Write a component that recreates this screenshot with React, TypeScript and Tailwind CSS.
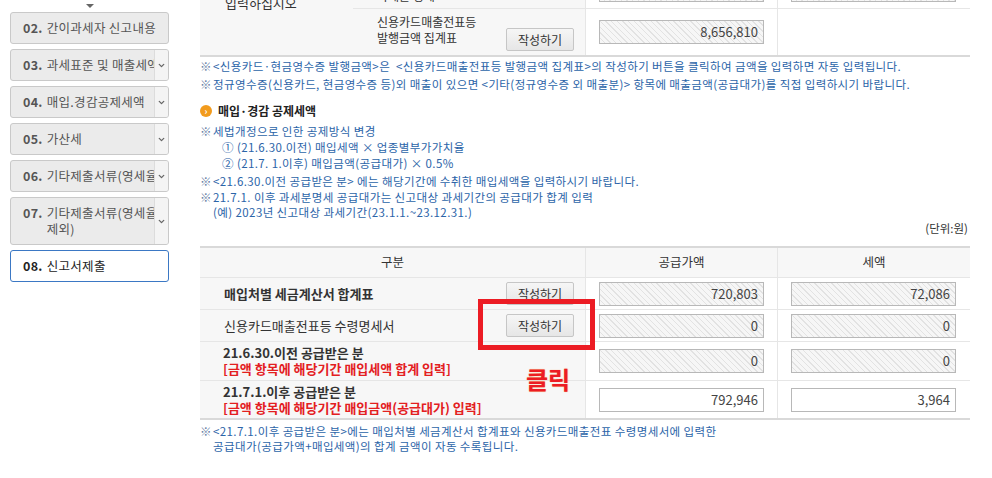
import React from 'react';
import { ChevronDown } from 'lucide-react';

const hatch =
    'bg-[repeating-linear-gradient(45deg,#f6f6f6_0px,#f6f6f6_3px,#e2e2e2_3px,#e2e2e2_4px)]';

function SideItem({
    num,
    label,
    dropdown = true,
    active = false,
    wrap = false,
}: {
    num: string;
    label: string;
    dropdown?: boolean;
    active?: boolean;
    wrap?: boolean;
}) {
    return (
        <div
            className={`flex w-[159px] rounded-[3px] border overflow-hidden ${
                active ? 'bg-white border-[#3b78c4]' : 'bg-[#ebebeb] border-[#c9c9c9]'
            } ${wrap ? 'h-[48px]' : 'h-[32px]'}`}
        >
            <div
                className={`flex-1 min-w-0 flex pl-[12px] text-[12.5px] tracking-[0.3px] leading-[16px] ${
                    wrap ? 'pt-[7px] whitespace-pre' : 'items-center whitespace-nowrap'
                } ${active ? 'text-[#222]' : 'text-[#555]'}`}
            >
                <span className="font-bold shrink-0 mr-[4px]">{num}</span>
                <span className="overflow-hidden">{label}</span>
            </div>
            {dropdown && (
                <div className="w-[14px] shrink-0 flex items-center justify-center border-l border-[#dcdcdc] bg-[#f4f4f4] text-[#666]">
                    <ChevronDown size={9} strokeWidth={3.5} />
                </div>
            )}
        </div>
    );
}

function Field({ value, ro = true }: { value?: string; ro?: boolean }) {
    return (
        <div
            className={`w-[165px] h-[24px] border border-[#b8b8b8] flex items-center justify-end pr-[5px] text-[13px] text-[#444] ${
                ro ? hatch : 'bg-white text-[#222]'
            }`}
        >
            {value}
        </div>
    );
}

function WriteBtn() {
    return (
        <div className="w-[68px] h-[23px] rounded-[2px] border border-[#c6c6c6] bg-gradient-to-b from-[#f6f6f6] to-[#e6e6e6] flex items-center justify-center text-[12px] text-[#333]">
            작성하기
        </div>
    );
}

function Note({ children, indent = false }: { children: React.ReactNode; indent?: boolean }) {
    return (
        <div className="flex">
            <span className="w-[13px] shrink-0 text-[#6b7fa6] tracking-normal">{indent ? '' : '※'}</span>
            <div>{children}</div>
        </div>
    );
}

export default function App() {
    return (
        <div className="w-[992px] h-[478px] overflow-hidden bg-white flex font-['Noto_Sans_CJK_KR',sans-serif]">
            {/* sidebar */}
            <aside className="w-[200px] shrink-0 pl-[10px] flex flex-col">
                <div className="h-[12px] w-[159px] flex justify-center pt-[4px]">
                    <div className="w-0 h-0 border-l-[4px] border-r-[4px] border-t-[4px] border-l-transparent border-r-transparent border-t-[#666]" />
                </div>
                <div className="flex flex-col gap-[5px]">
                    <SideItem num="02." label="간이과세자 신고내용" dropdown={false} />
                    <SideItem num="03." label="과세표준 및 매출세액" />
                    <SideItem num="04." label="매입.경감공제세액" />
                    <SideItem num="05." label="가산세" />
                    <SideItem num="06." label="기타제출서류(영세율 첨부서류)" />
                    <SideItem num="07." label={'기타제출서류(영세율\n제외)'} wrap />
                    <SideItem num="08." label="신고서제출" dropdown={false} active />
                </div>
            </aside>

            {/* main */}
            <main className="w-[770px] shrink-0 text-[12px] text-[#333]">
                {/* top table (continued) */}
                <div className="-mt-[40px] flex border-b-2 border-[#d9d9d9]">
                    <div className="w-[153px] bg-[#f7f7f7] pl-[25px] pt-[35px] leading-[16px] text-[13px]">입력하십시오</div>
                    <div className="flex-1">
                        <div className="flex h-[49px] border-b border-[#e6e6e6]">
                            <div className="w-[232px] bg-[#f7f7f7] pl-[24px] pt-[28px] leading-[16px]">과세분 명세</div>
                            <div className="w-[192px] border-l border-[#e6e6e6] pl-[13px] pt-[18px]">
                                <Field />
                            </div>
                            <div className="w-[193px] border-l border-[#e6e6e6] pl-[13px] pt-[18px]">
                                <Field />
                            </div>
                        </div>
                        <div className="flex h-[46px]">
                            <div className="w-[232px] bg-[#f7f7f7] pl-[24px] pr-[11px] flex justify-between">
                                <div className="pt-[5px] leading-[16px]">
                                    신용카드매출전표등
                                    <br />
                                    발행금액 집계표
                                </div>
                                <div className="self-end mb-[4px]">
                                    <WriteBtn />
                                </div>
                            </div>
                            <div className="w-[192px] border-l border-[#e6e6e6] pl-[13px] flex items-center">
                                <Field value="8,656,810" />
                            </div>
                            <div className="w-[193px] border-l border-[#e6e6e6]" />
                        </div>
                    </div>
                </div>

                {/* notes */}
                <div className="text-[11.5px] tracking-[0.4px] text-[#2b64a8] leading-[18px]">
                    <Note>
                        &lt;신용카드·현금영수증 발행금액&gt;은 &nbsp;&lt;신용카드매출전표등 발행금액 집계표&gt;의 작성하기 버튼을 클릭하여 금액을 입력하면 자동 입력됩니다.
                    </Note>
                    <Note>
                        정규영수증(신용카드, 현금영수증 등)외 매출이 있으면 &lt;기타(정규영수증 외 매출분)&gt; 항목에 매출금액(공급대가)를 직접 입력하시기 바랍니다.
                    </Note>
                </div>

                <div className="mt-[8px] h-[20px] flex items-center gap-[6px]">
                    <span className="w-[12px] h-[12px] rounded-full bg-[#f29b1d] flex items-center justify-center text-white text-[9px] leading-none font-bold">
                        ›
                    </span>
                    <span className="text-[12px] font-bold text-[#222]">매입·경감 공제세액</span>
                </div>

                <div className="mt-[2px] text-[11.5px] tracking-[0.4px] text-[#2b64a8] leading-[16px]">
                    <Note>세법개정으로 인한 공제방식 변경</Note>
                    <div className="pl-[22px]">① (21.6.30.이전) 매입세액 × 업종별부가가치율</div>
                    <div className="pl-[22px]">② (21.7. 1.이후) 매입금액(공급대가) × 0.5%</div>
                    <div className="mt-[2px]">
                        <Note>&lt;21.6.30.이전 공급받은 분&gt; 에는 해당기간에 수취한 매입세액을 입력하시기 바랍니다.</Note>
                    </div>
                    <div className="mt-[1px] leading-[15px]">
                        <Note>
                            21.7.1. 이후 과세분명세 공급대가는 신고대상 과세기간의 공급대가 합계 입력
                            <br />
                            (예) 2023년 신고대상 과세기간(23.1.1.~23.12.31.)
                        </Note>
                    </div>
                </div>

                <div className="text-right text-[11.5px] leading-[16px] text-[#333] pr-[2px]">(단위:원)</div>

                {/* main table */}
                <div className="relative mt-[10px]">
                    <div className="border-t-2 border-b-2 border-[#d9d9d9]">
                        <div className="flex h-[30px] bg-[#f7f7f7] border-b border-[#e6e6e6] items-center text-[#333] text-[12.5px]">
                            <div className="w-[385px] text-center">구분</div>
                            <div className="w-[192px] h-full border-l border-[#e6e6e6] flex items-center justify-center">공급가액</div>
                            <div className="w-[193px] h-full border-l border-[#e6e6e6] flex items-center justify-center">세액</div>
                        </div>

                        <div className="flex h-[32px] border-b border-[#e6e6e6]">
                            <div className="w-[385px] bg-[#f7f7f7] pl-[24px] pr-[11px] flex items-center justify-between">
                                <span className="font-bold text-[#333] text-[13px]">매입처별 세금계산서 합계표</span>
                                <WriteBtn />
                            </div>
                            <div className="w-[192px] border-l border-[#e6e6e6] pl-[13px] flex items-center">
                                <Field value="720,803" />
                            </div>
                            <div className="w-[193px] border-l border-[#e6e6e6] pl-[13px] flex items-center">
                                <Field value="72,086" />
                            </div>
                        </div>

                        <div className="flex h-[32px] border-b border-[#e6e6e6]">
                            <div className="w-[385px] bg-[#f7f7f7] pl-[24px] pr-[11px] flex items-center justify-between">
                                <span className="text-[#333] text-[13px]">신용카드매출전표등 수령명세서</span>
                                <WriteBtn />
                            </div>
                            <div className="w-[192px] border-l border-[#e6e6e6] pl-[13px] flex items-center">
                                <Field value="0" />
                            </div>
                            <div className="w-[193px] border-l border-[#e6e6e6] pl-[13px] flex items-center">
                                <Field value="0" />
                            </div>
                        </div>

                        <div className="flex h-[39px] border-b border-[#e6e6e6]">
                            <div className="w-[385px] bg-[#f7f7f7] pl-[23px] flex flex-col justify-center leading-[16px] font-bold text-[13px]">
                                <span className="text-[#333]">21.6.30.이전 공급받은 분</span>
                                <span className="text-[#e3201f]">[금액 항목에 해당기간 매입세액 합계 입력]</span>
                            </div>
                            <div className="w-[192px] border-l border-[#e6e6e6] pl-[13px] flex items-center">
                                <Field value="0" />
                            </div>
                            <div className="w-[193px] border-l border-[#e6e6e6] pl-[13px] flex items-center">
                                <Field value="0" />
                            </div>
                        </div>

                        <div className="flex h-[37px]">
                            <div className="w-[385px] bg-[#f7f7f7] pl-[23px] flex flex-col justify-center leading-[16px] font-bold text-[13px]">
                                <span className="text-[#333]">21.7.1.이후 공급받은 분</span>
                                <span className="text-[#e3201f]">[금액 항목에 해당기간 매입금액(공급대가) 입력]</span>
                            </div>
                            <div className="w-[192px] border-l border-[#e6e6e6] pl-[13px] flex items-center">
                                <Field value="792,946" ro={false} />
                            </div>
                            <div className="w-[193px] border-l border-[#e6e6e6] pl-[13px] flex items-center">
                                <Field value="3,964" ro={false} />
                            </div>
                        </div>
                    </div>

                    {/* click annotation */}
                    <div className="absolute left-[278px] top-[53px] w-[117px] h-[51px] border-[5px] border-[#ec1c24]" />
                    <div className="absolute left-[326px] top-[118px] text-[24px] leading-[30px] font-bold text-[#ec1c24] [text-shadow:0_0_1px_#f7a35c]">
                        클릭
                    </div>
                </div>

                <div className="mt-[4px] text-[11.5px] tracking-[0.4px] text-[#2b64a8] leading-[15px]">
                    <Note>
                        &lt;21.7.1.이후 공급받은 분&gt;에는 매입처별 세금계산서 합계표와 신용카드매출전표 수령명세서에 입력한
                        <br />
                        공급대가(공급가액+매입세액)의 합계 금액이 자동 수록됩니다.
                    </Note>
                </div>
            </main>
        </div>
    );
}
